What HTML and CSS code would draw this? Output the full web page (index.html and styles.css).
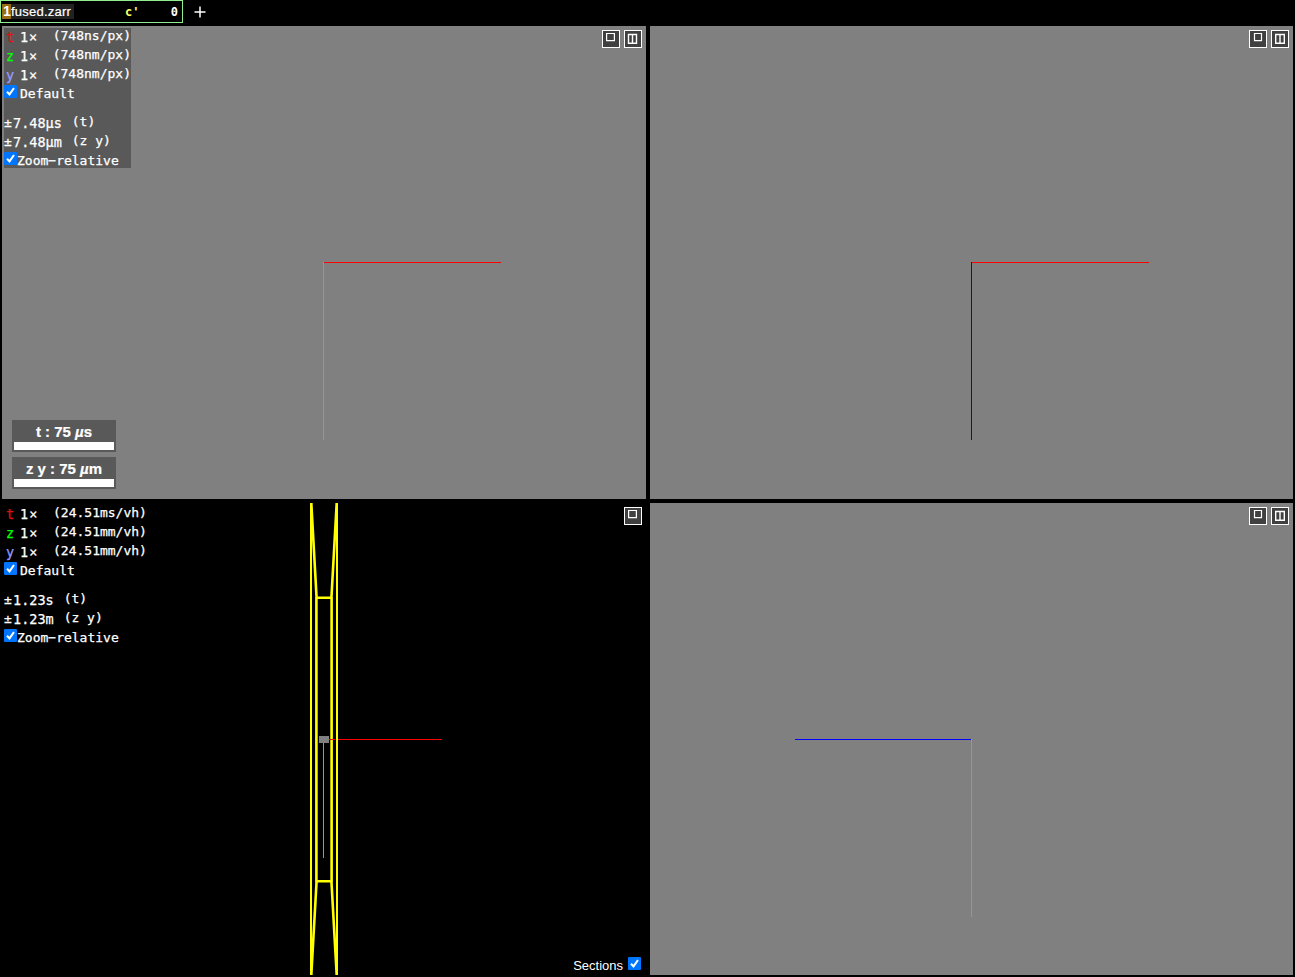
FILE: index.html
```
<!DOCTYPE html>
<html lang="en">
<head>
<meta charset="utf-8">
<title>fused.zarr</title>
<link rel="stylesheet" href="styles.css">
</head>
<body>
<header class="layers">
  <div class="layer"><span class="num">1</span><span class="name">fused.zarr</span><span class="dim">c'</span><span class="val">0</span></div>
  <svg class="add" width="12" height="12" viewBox="0 0 12 12"><path d="M6 .5v11M.5 6h11"/></svg>
</header>
<main class="grid">
  <section class="panel gray">
    <svg class="scene" viewBox="0 0 644 473"><path class="g" d="M321.5 236v178"/><path class="r" d="M322 236.5h177"/></svg>
    <div class="info shade">
      <div class="row"><b class="t">t</b><span class="f">1<span class="times">×</span></span><span class="s">(748ns/px)</span></div>
      <div class="row"><b class="z">z</b><span class="f">1<span class="times">×</span></span><span class="s">(748nm/px)</span></div>
      <div class="row"><b class="y">y</b><span class="f">1<span class="times">×</span></span><span class="s">(748nm/px)</span></div>
      <div class="check def"><svg class="box" viewBox="0 0 13 13"><rect width="13" height="13" rx="1"/><path d="M3 6.8l2.5 2.6L10 3"/></svg><span>Default</span></div>
      <div class="depth"><span class="pm">±</span><span class="f">7.48µs</span><span class="u">(t)</span></div>
      <div class="depth"><span class="pm">±</span><span class="f">7.48µm</span><span class="u">(z y)</span></div>
      <div class="check rel"><svg class="box" viewBox="0 0 13 13"><rect width="13" height="13" rx="1"/><path d="M3 6.8l2.5 2.6L10 3"/></svg><span>Zoom−relative</span></div>
    </div>
    <div class="tools">
      <svg viewBox="0 0 18 18"><rect class="frame" x=".5" y=".5" width="17" height="17"/><path d="M4.6 3.5h7.8v7.2H4.6z"/></svg>
      <svg viewBox="0 0 18 18"><rect class="frame" x=".5" y=".5" width="17" height="17"/><path class="cols" d="M4.5 4.5h8v8.8h-8zM8.5 4.5v8.8"/></svg>
    </div>
    <div class="scales">
      <div class="scale"><span>t : 75 <i>µ</i>s</span><div class="bar"></div></div>
      <div class="scale"><span>z y : 75 <i>µ</i>m</span><div class="bar"></div></div>
    </div>
  </section>
  <section class="panel gray">
    <svg class="scene" viewBox="0 0 643 473"><path class="b" d="M321.5 236v178"/><path class="r" d="M322 236.5h177"/></svg>
    <div class="tools">
      <svg viewBox="0 0 18 18"><rect class="frame" x=".5" y=".5" width="17" height="17"/><path d="M5.5 3.5h7v7.2h-7z"/></svg>
      <svg viewBox="0 0 18 18"><rect class="frame" x=".5" y=".5" width="17" height="17"/><path class="cols" d="M4.7 4.5h8.6v8.8H4.7zM9 4.5v8.8"/></svg>
    </div>
  </section>
  <section class="panel">
    <svg class="scene" viewBox="0 0 644 472">
      <path class="edge" d="M309 0v472M335 0v472"/>
      <path class="edge far" d="M314.4 94v285M329.6 94v285M315 94.7h15M315 378.3h15M309.3 0L314.6 95M334.7 0L329.4 95M314.6 378L309.3 472M329.4 378L334.7 472"/>
      <path class="g" d="M321.5 239v116"/><path class="r" d="M327 236.5h6M336 236.5h104"/>
      <rect class="slice" x="317" y="233" width="10" height="7"/>
    </svg>
    <div class="info">
      <div class="row"><b class="t">t</b><span class="f">1<span class="times">×</span></span><span class="s">(24.51ms/vh)</span></div>
      <div class="row"><b class="z">z</b><span class="f">1<span class="times">×</span></span><span class="s">(24.51mm/vh)</span></div>
      <div class="row"><b class="y">y</b><span class="f">1<span class="times">×</span></span><span class="s">(24.51mm/vh)</span></div>
      <div class="check def"><svg class="box" viewBox="0 0 13 13"><rect width="13" height="13" rx="1"/><path d="M3 6.8l2.5 2.6L10 3"/></svg><span>Default</span></div>
      <div class="depth"><span class="pm">±</span><span class="f">1.23s</span><span class="u">(t)</span></div>
      <div class="depth"><span class="pm">±</span><span class="f">1.23m</span><span class="u">(z y)</span></div>
      <div class="check rel"><svg class="box" viewBox="0 0 13 13"><rect width="13" height="13" rx="1"/><path d="M3 6.8l2.5 2.6L10 3"/></svg><span>Zoom−relative</span></div>
    </div>
    <div class="tools">
      <svg viewBox="0 0 18 18"><rect class="frame" x=".5" y=".5" width="17" height="17"/><path d="M4.6 3.5h7.8v7.2H4.6z"/></svg>
    </div>
    <div class="sections"><span>Sections</span><svg class="box" viewBox="0 0 13 13"><rect width="13" height="13" rx="1"/><path d="M3 6.8l2.5 2.6L10 3"/></svg></div>
  </section>
  <section class="panel gray">
    <svg class="scene" viewBox="0 0 643 472"><path class="g" d="M321.5 236v178"/><path class="b" d="M145 236.5h176"/></svg>
    <div class="tools">
      <svg viewBox="0 0 18 18"><rect class="frame" x=".5" y=".5" width="17" height="17"/><path d="M5.5 3.5h7v7.2h-7z"/></svg>
      <svg viewBox="0 0 18 18"><rect class="frame" x=".5" y=".5" width="17" height="17"/><path class="cols" d="M4.7 4.5h8.6v8.8H4.7zM9 4.5v8.8"/></svg>
    </div>
  </section>
</main>
</body>
</html>
```
FILE: styles.css
```
* { box-sizing: border-box; }
body { margin: 0; width: 1295px; height: 977px; overflow: hidden; background: #000; color: #fff; font: 13px "Liberation Sans", sans-serif; }
.layers { display: flex; height: 26px; align-items: flex-start; }
.layer { display: flex; align-items: center; width: 183px; height: 23px; border: 1px solid #90ee90; padding: 0 4px 0 1px; line-height: 15px; }
.num { background: #9a6c16; font-weight: bold; font-size: 14px; width: 9px; padding-left: 1px; }
.name { background: #222; width: 63px; letter-spacing: 0.22px; -webkit-text-stroke: 0.2px; }
.dim, .val { padding-top: 2px; font: bold 12px/15px "DejaVu Sans Mono", monospace; }
.dim { color: #ff6; margin-left: 51px; }
.val { margin-left: auto; }
.add { margin: 6px 0 0 11px; fill: none; stroke: #fff; stroke-width: 1.5; }
.grid { display: grid; grid-template-columns: 644px 643px; grid-template-rows: 473px 472px; gap: 4px; padding-left: 2px; }
.panel { position: relative; overflow: hidden; background: #000; }
.gray { background: #808080; }
.scene { display: block; width: 100%; height: 100%; fill: none; }
.r { stroke: #f00; }
.g { stroke: #0f0; }
.b { stroke: #00f; }
.edge { stroke: #ff0; stroke-width: 2; }
.far { stroke-width: 2.6; }
.slice { fill: #808080; }
.info { position: absolute; left: 2px; top: 2px; height: 140px; font: 13px/19px "DejaVu Sans Mono", monospace; white-space: nowrap; -webkit-text-stroke: 0.25px; }
.shade { width: 127px; background: #595959; }
.row, .depth { display: flex; height: 19px; }
.row b { width: 16px; padding-left: 2px; font-size: 13.5px; font-weight: normal; }
.t { color: #e01010; }
.z { color: #0f0; }
.y { color: #99f; }
.row .f { width: 33px; }
.f { font-size: 13.5px; }
.times { margin-left: 1px; }
.s { line-height: 15px; }
.check { display: flex; height: 17px; line-height: 18px; }
.def { height: 28px; gap: 3px; }
.rel { padding-top: 1px; }
.box { width: 13px; height: 13px; flex: none; }
.box rect { fill: #0075ff; }
.box path { fill: none; stroke: #fff; stroke-width: 2; }
.depth .pm { width: 9px; }
.depth .f { padding-top: 1px; }
.depth .u { padding-left: 10px; line-height: 17px; }
.tools { position: absolute; top: 4px; right: 4px; display: flex; gap: 4px; }
.tools svg { width: 18px; height: 18px; fill: none; stroke: #fff; }
.tools path { stroke-width: 1.2; }
.tools .cols { stroke-width: 1.4; }
.frame { fill: #404040; }
.scales { position: absolute; left: 10px; bottom: 10px; display: grid; gap: 5px; }
.scale { width: 104px; height: 32px; padding: 2px; background: #595959; font: bold 15px/20px "Liberation Sans", sans-serif; text-align: center; -webkit-text-stroke: 0.2px; }
.scale span { display: block; }
.bar { height: 8px; background: #fff; }
.sections { position: absolute; right: 5px; bottom: 1px; display: flex; gap: 5px; line-height: 17px; }
```
